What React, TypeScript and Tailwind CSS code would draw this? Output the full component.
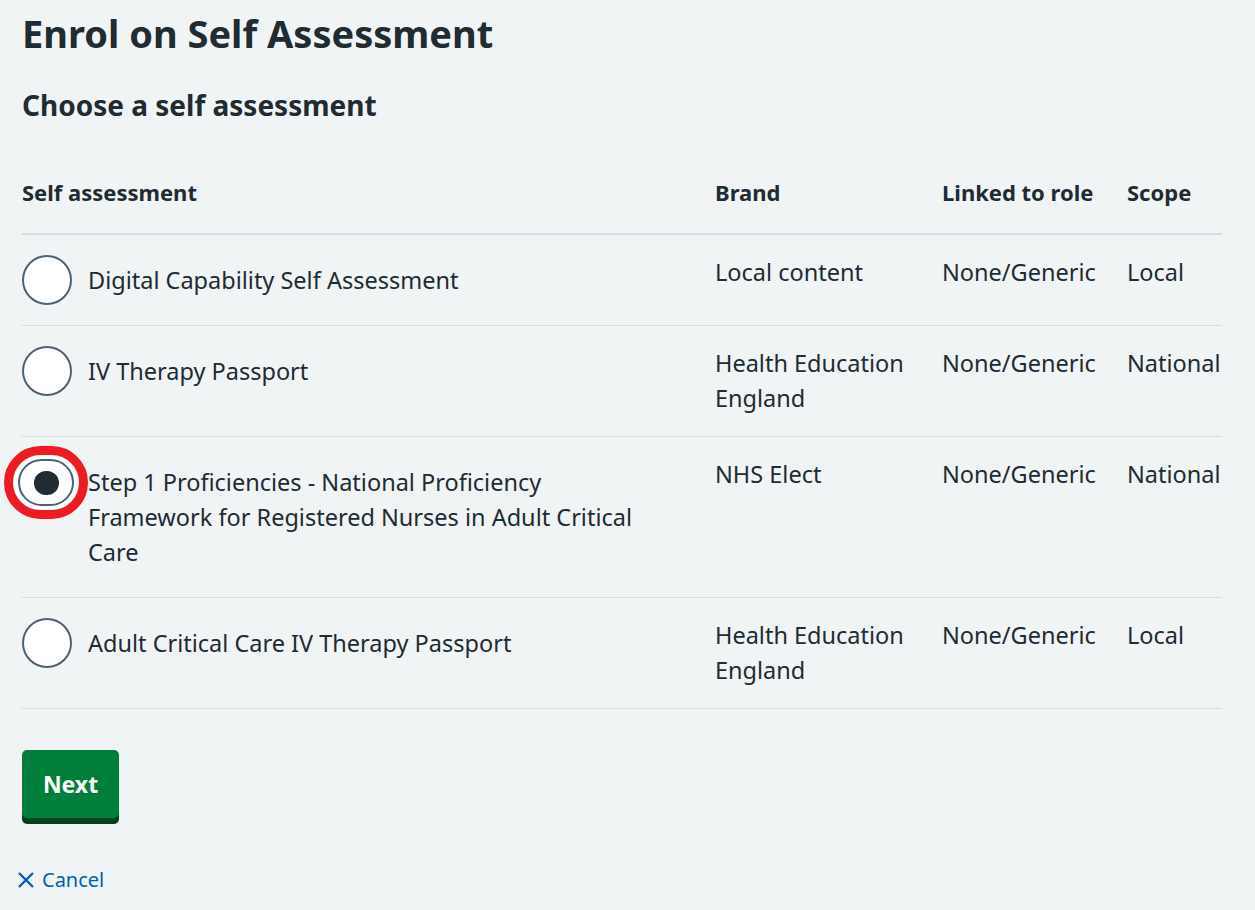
import React from "react";

type Row = {
    title: string;
    brand: string;
    role: string;
    scope: string;
    selected?: boolean;
};

const rows: Row[] = [
    { title: "Digital Capability Self Assessment", brand: "Local content", role: "None/Generic", scope: "Local" },
    { title: "IV Therapy Passport", brand: "Health Education England", role: "None/Generic", scope: "National" },
    {
        title: "Step 1 Proficiencies - National Proficiency Framework for Registered Nurses in Adult Critical Care",
        brand: "NHS Elect",
        role: "None/Generic",
        scope: "National",
        selected: true,
    },
    { title: "Adult Critical Care IV Therapy Passport", brand: "Health Education England", role: "None/Generic", scope: "Local" },
];

const Radio = ({ selected }: { selected?: boolean }) => {
    if (!selected) {
        return <span className="block shrink-0 w-[50px] h-[50px] rounded-full border-2 border-[#4c6272] bg-white" />;
    }
    // red annotation ring drawn over the chosen radio
    return (
        <span className="relative block shrink-0 w-[50px] h-[50px]">
            <span className="absolute left-[-18px] top-[-11px] w-[84px] h-[73px] rounded-full border-[9px] border-[#ed1c24] bg-white flex items-center justify-center">
                <span className="w-[56px] h-[47px] rounded-full border-2 border-[#4c6272] bg-white flex items-center justify-center">
                    <span className="w-[25px] h-[24px] rounded-full bg-[#212b32]" />
                </span>
            </span>
        </span>
    );
};

export default function App() {
    return (
        <div className="min-h-[910px] bg-[#f0f4f5] text-[#212b32] px-[22px] pt-[9px] font-['Noto_Sans',sans-serif]">
            <h1 className="text-[38px] leading-[48px] font-bold">Enrol on Self Assessment</h1>
            <h2 className="mt-[28px] text-[28px] leading-[40px] font-bold">Choose a self assessment</h2>

            <table className="mt-[30px] w-[1200px] table-fixed border-collapse text-[23.5px] leading-[35px]">
                <colgroup>
                    <col className="w-[693px]" />
                    <col className="w-[227px]" />
                    <col className="w-[185px]" />
                    <col className="w-[95px]" />
                </colgroup>
                <thead>
                    <tr className="border-b-2 border-[#d8dde0] text-[22px]">
                        <th className="text-left font-bold pt-[20px] pb-[23px]">Self assessment</th>
                        <th className="text-left font-bold pt-[20px] pb-[23px]">Brand</th>
                        <th className="text-left font-bold pt-[20px] pb-[23px]">Linked to role</th>
                        <th className="text-left font-bold pt-[20px] pb-[23px]">Scope</th>
                    </tr>
                </thead>
                <tbody>
                    {rows.map((r) => (
                        <tr key={r.title} className="border-b border-[#d8dde0] align-top">
                            <td className="pt-[20px] pb-[19px]">
                                <div className="flex items-start">
                                    <Radio selected={r.selected} />
                                    <span className="pl-[16px] py-[8px] max-w-[574px]">{r.title}</span>
                                </div>
                            </td>
                            <td className="py-[20px] pr-[10px]">{r.brand}</td>
                            <td className="py-[20px] whitespace-nowrap">{r.role}</td>
                            <td className="py-[20px] whitespace-nowrap">{r.scope}</td>
                        </tr>
                    ))}
                </tbody>
            </table>

            <button className="mt-[41px] block w-[97px] h-[68px] rounded-[5px] bg-[#007f3b] text-white text-[23px] font-bold shadow-[0_6px_0_#00401e]">
                Next
            </button>

            <a href="#" className="mt-[48px] -ml-[5px] inline-flex items-center gap-[7px] text-[#005eb8] text-[20px] leading-[28px]">
                <svg width="18" height="18" viewBox="0 0 18 18" fill="none" stroke="currentColor" strokeWidth="2.4">
                    <path d="M2 2 L16 16 M16 2 L2 16" />
                </svg>
                Cancel
            </a>
        </div>
    );
}
